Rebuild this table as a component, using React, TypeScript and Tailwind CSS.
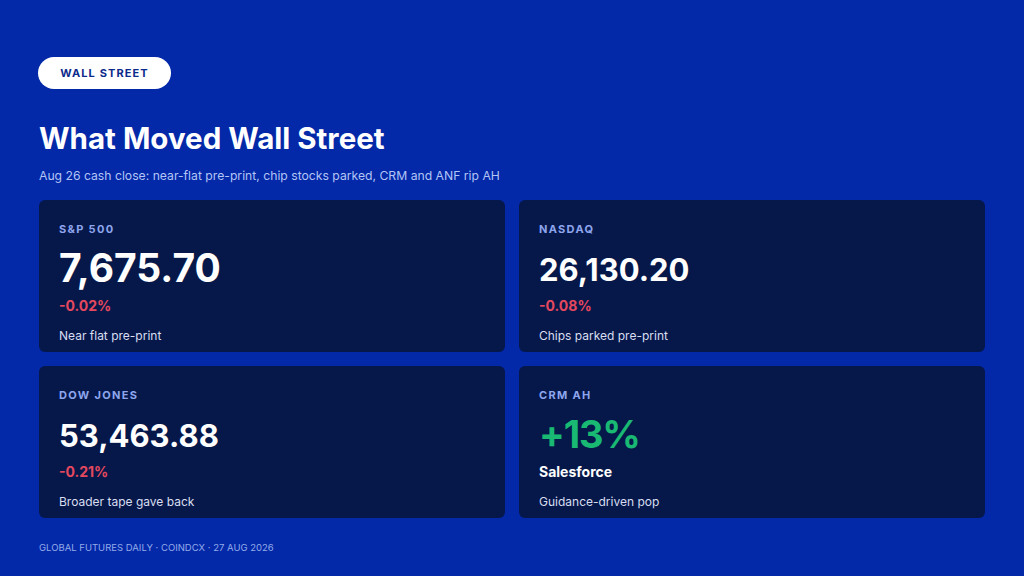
import React from 'react';

type Card = {
  label: string;
  value: string;
  big?: boolean;
  change?: string;
  name?: string;
  note: string;
  up?: boolean;
};

const cards: Card[] = [
  { label: 'S&P 500', value: '7,675.70', big: true, change: '-0.02%', note: 'Near flat pre-print' },
  { label: 'NASDAQ', value: '26,130.20', change: '-0.08%', note: 'Chips parked pre-print' },
  { label: 'DOW JONES', value: '53,463.88', change: '-0.21%', note: 'Broader tape gave back' },
  { label: 'CRM AH', value: '+13%', name: 'Salesforce', note: 'Guidance-driven pop', up: true },
];

function MarketCard({ card }: { card: Card }) {
  return (
    <div className="h-[152px] rounded-md bg-[#06184a] px-5 pt-[22px]">
      <div className="text-[11px] font-bold leading-[14px] tracking-[0.12em] text-[#8ea6ee]">
        {card.label}
      </div>
      {card.up ? (
        <>
          {/* 大きい上昇率 */}
          <div className="mt-[10px] text-[38px] font-bold leading-[44px] tracking-[-0.03em] text-[#19b873]">
            {card.value}
          </div>
          <div className="mt-[6px] text-[14px] font-bold leading-[20px] text-white">{card.name}</div>
        </>
      ) : (
        <>
          <div
            className={`mt-[12px] font-bold leading-[40px] text-white ${
              card.big ? 'text-[39px]' : 'pt-[2px] text-[31px]'
            }`}
          >
            {card.value}
          </div>
          <div className={`${card.big ? 'mt-[8px]' : 'mt-[6px]'} text-[14px] font-bold leading-[20px] text-[#e5485e]`}>
            {card.change}
          </div>
        </>
      )}
      <div className="mt-[12px] text-[12px] leading-[16px] text-[#d9def0]">{card.note}</div>
    </div>
  );
}

export default function App() {
  return (
    <div
      className="flex h-[576px] w-[1024px] flex-col overflow-hidden bg-[#0328a8] px-[39px] pt-[57px]"
      style={{ fontFamily: 'Inter, "Noto Sans", sans-serif' }}
    >
      {/* ヘッダー */}
      <div className="-ml-px flex">
        <span className="flex h-8 w-[133px] items-center justify-center rounded-full bg-white text-[11px] font-bold tracking-[0.1em] text-[#0b2a8c]">
          WALL STREET
        </span>
      </div>
      <h1 className="mt-[31px] text-[29.5px] font-bold leading-[36px] text-white">What Moved Wall Street</h1>
      <p className="mt-[12px] text-[12.2px] leading-[16px] text-[#b3c5f5]">
        Aug 26 cash close: near-flat pre-print, chip stocks parked, CRM and ANF rip AH
      </p>

      {/* カード */}
      <div className="mt-[16px] grid grid-cols-2 gap-[14px]">
        {cards.map((c) => (
          <MarketCard key={c.label} card={c} />
        ))}
      </div>

      <div className="mt-[23px] text-[9.5px] leading-[14px] text-[#93ace9]">
        GLOBAL FUTURES DAILY · COINDCX · 27 AUG 2026
      </div>
    </div>
  );
}
